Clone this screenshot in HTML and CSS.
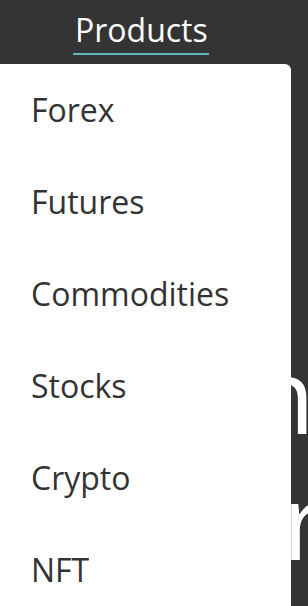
FILE: index.html
```html
<!DOCTYPE html>
<html lang="en">

<head>
    <meta charset="UTF-8">
    <meta name="viewport" content="width=device-width, initial-scale=1.0">
    <title>Products Menu</title>
    <link rel="stylesheet" href="styles.css">
</head>

<body>
    <header class="top-bar">
        <a class="nav-link active" href="#">Products</a>
    </header>

    <section class="hero">
        <div class="hero-line first">Learn</div>
        <div class="hero-line second">Trader</div>
    </section>

    <nav class="dropdown">
        <a class="dropdown-item" href="#">Forex</a>
        <a class="dropdown-item" href="#">Futures</a>
        <a class="dropdown-item" href="#">Commodities</a>
        <a class="dropdown-item" href="#">Stocks</a>
        <a class="dropdown-item" href="#">Crypto</a>
        <a class="dropdown-item" href="#">NFT</a>
    </nav>
</body>

</html>
```

FILE: styles.css
```css
body {
    font-family: 'Open Sans', sans-serif;
    background: #343434;
    margin: 0;
    padding: 0;
    height: 606px;
    overflow: hidden;
    position: relative;
}

.top-bar {
    height: 64px;
    box-sizing: border-box;
    padding: 8px 0 0 73px;
    display: flex;
    align-items: flex-start;
}

.nav-link {
    font-size: 32px;
    line-height: normal;
    color: #ffffff;
    text-decoration: none;
    padding: 0 1px 2px 2px;
    border-bottom: 2px solid #62b6b7;
}

.hero {
    margin-top: 267px;
    margin-right: -7px;
    color: #ffffff;
    font-size: 105px;
    line-height: 126px;
    white-space: nowrap;
}

.hero-line {
    text-align: right;
}

.hero-line.second {
    padding-right: 6px;
}

.dropdown {
    position: absolute;
    top: 64px;
    left: 0;
    width: 291px;
    bottom: -40px;
    background: #ffffff;
    border-top-right-radius: 6px;
    display: flex;
    flex-direction: column;
}

.dropdown-item {
    display: block;
    padding-left: 31px;
    font-size: 32px;
    line-height: 92px;
    color: #333333;
    text-decoration: none;
}
```
